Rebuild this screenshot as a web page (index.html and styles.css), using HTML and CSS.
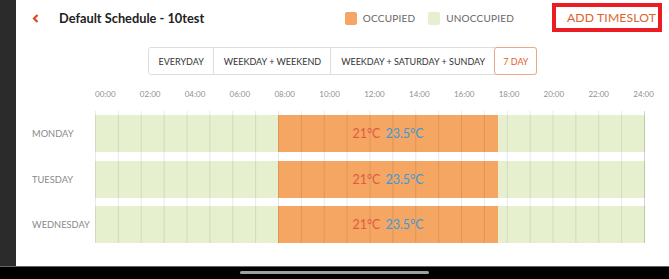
FILE: index.html
```html
<!DOCTYPE html>
<html lang="en">
<head>
  <meta charset="UTF-8" />
  <title>Default Schedule - 10test</title>
  <link rel="stylesheet" href="styles.css">
</head>
<body>

<div class="screen">
  <div class="edge"></div>

  <main class="page">
    <!-- cabecera -->
    <header class="topbar">
      <button class="back" title="Back">
        <svg width="7" height="9" viewBox="0 0 7 9"><polyline points="5.5,1 2,4.5 5.5,8" fill="none" stroke="#dc4a1c" stroke-width="2.2"/></svg>
      </button>
      <h1 class="title">Default Schedule - 10test</h1>

      <div class="legend">
        <span class="swatch occupied"></span><span class="legend-text">OCCUPIED</span>
        <span class="swatch unoccupied"></span><span class="legend-text">UNOCCUPIED</span>
      </div>

      <button class="add">ADD TIMESLOT</button>
    </header>

    <!-- modos -->
    <nav class="modes">
      <button class="mode">EVERYDAY</button>
      <button class="mode">WEEKDAY + WEEKEND</button>
      <button class="mode">WEEKDAY + SATURDAY + SUNDAY</button>
      <button class="mode active">7 DAY</button>
    </nav>

    <!-- horario -->
    <section class="schedule">
      <div class="hours">
        <span>00:00</span><span>02:00</span><span>04:00</span><span>06:00</span>
        <span>08:00</span><span>10:00</span><span>12:00</span><span>14:00</span>
        <span>16:00</span><span>18:00</span><span>20:00</span><span>22:00</span>
        <span>24:00</span>
      </div>

      <div class="days">
        <div class="day">MONDAY</div>
        <div class="day">TUESDAY</div>
        <div class="day">WEDNESDAY</div>
      </div>

      <div class="track">
        <div class="row">
          <div class="slot" style="margin-left: 33.33%; width: 39.9%;">
            <span class="heat">21°C</span><span class="cool">23.5°C</span>
          </div>
        </div>
        <div class="row">
          <div class="slot" style="margin-left: 33.33%; width: 39.9%;">
            <span class="heat">21°C</span><span class="cool">23.5°C</span>
          </div>
        </div>
        <div class="row">
          <div class="slot" style="margin-left: 33.33%; width: 39.9%;">
            <span class="heat">21°C</span><span class="cool">23.5°C</span>
          </div>
        </div>
        <div class="gridlines"></div>
      </div>
    </section>
  </main>
</div>

<div class="navbar"><span class="pill"></span></div>

</body>
</html>
```

FILE: styles.css
```css
body {
  margin: 0;
  background: #000;
  font-family: 'Lato', 'Open Sans', sans-serif;
  width: 669px;
  height: 279px;
  overflow: hidden;
}

.screen {
  display: flex;
  height: 266px;
}

.edge {
  width: 16px;
  background: #2b2b2b;
}

.page {
  flex: 1;
  background: #fff;
  padding: 3px 7px 0 16px;
  display: flex;
  flex-direction: column;
}

/* cabecera */
.topbar {
  display: flex;
  align-items: center;
  height: 29px;
}

.back {
  border: none;
  background: none;
  padding: 0;
  width: 7px;
  height: 9px;
  display: flex;
  margin-top: 1px;
}

.title {
  margin: 0 0 0 20px;
  font-size: 12.8px;
  font-weight: 700;
  color: #222;
}

.legend {
  margin-left: auto;
  display: flex;
  align-items: center;
  margin-top: 1px;
}

.swatch {
  width: 12px;
  height: 13px;
  border-radius: 2px;
  margin-right: 6px;
}

.swatch.occupied { background: #f5a565; }
.swatch.unoccupied { background: #e6f0d0; margin-left: 13px; }

.legend-text {
  font-size: 10px;
  color: #666;
  letter-spacing: 0.02em;
}

.add {
  margin-left: 38px;
  height: 29px;
  width: 110px;
  box-sizing: border-box;
  border: 4.5px solid #ec1c24;
  background: #fff;
  padding: 0 2px 0 0;
  font-family: 'Lato', sans-serif;
  font-size: 12.2px;
  color: #e0622c;
  letter-spacing: 0.01em;
  white-space: nowrap;
  text-align: right;
}

/* modos */
.modes {
  align-self: center;
  display: flex;
  margin: 15px -7px 0 -16px;
  border: 1px solid #ddd;
  border-radius: 3px;
  height: 28px;
  box-sizing: border-box;
}

.mode {
  border: none;
  border-left: 1px solid #ddd;
  background: #fff;
  font-family: 'Lato', sans-serif;
  font-size: 9px;
  color: #333;
  padding: 0 9px 0 10px;
  height: 26px;
}

.mode:first-child {
  border-left: none;
  border-radius: 3px 0 0 3px;
}

.mode.active {
  color: #e0622c;
  border: 1px solid #e9a887;
  border-radius: 3px;
  height: 28px;
  margin: -1px -1px -1px 0;
  padding: 0 8px;
}

/* horario */
.schedule {
  display: grid;
  grid-template-columns: 63px 550px;
  grid-template-rows: auto 1fr;
  margin-top: 13px;
}

.hours {
  grid-column: 2;
  width: 559px;
  display: flex;
  justify-content: space-between;
  font-size: 8px;
  color: #8f8f8f;
  line-height: 12px;
  margin-bottom: 11px;
}

.days {
  grid-column: 1;
  grid-row: 2;
  display: flex;
  flex-direction: column;
  gap: 8.5px;
  padding-top: 4px;
}

.day {
  height: 37px;
  display: flex;
  align-items: center;
  font-size: 9.3px;
  color: #8a8a8a;
}

.track {
  grid-column: 2;
  grid-row: 2;
  position: relative;
  display: flex;
  flex-direction: column;
  gap: 8.5px;
  padding-top: 4px;
}

.row {
  height: 37px;
  background: #e6f0cf;
  display: flex;
}

.slot {
  background: #f4a662;
  display: flex;
  align-items: center;
  justify-content: center;
  gap: 5px;
  font-size: 12.5px;
}

.heat { color: #e15a45; }
.cool { color: #3d9ad8; }

.gridlines {
  position: absolute;
  top: 0;
  left: 0;
  right: 0;
  bottom: 0;
  width: 550px;
  box-sizing: border-box;
  border-right: 1px solid rgba(0, 0, 0, 0.09);
  background-image: linear-gradient(to right, rgba(0, 0, 0, 0.09) 1px, transparent 1px);
  background-size: calc(549px / 24) 100%;
  pointer-events: none;
}

/* barra inferior */
.navbar {
  height: 13px;
  border-top: 1px solid #666;
  display: flex;
  justify-content: center;
  padding-top: 4px;
  box-sizing: border-box;
}

.pill {
  width: 189px;
  height: 3px;
  border-radius: 2px;
  background: #a0a0a0;
}
```
